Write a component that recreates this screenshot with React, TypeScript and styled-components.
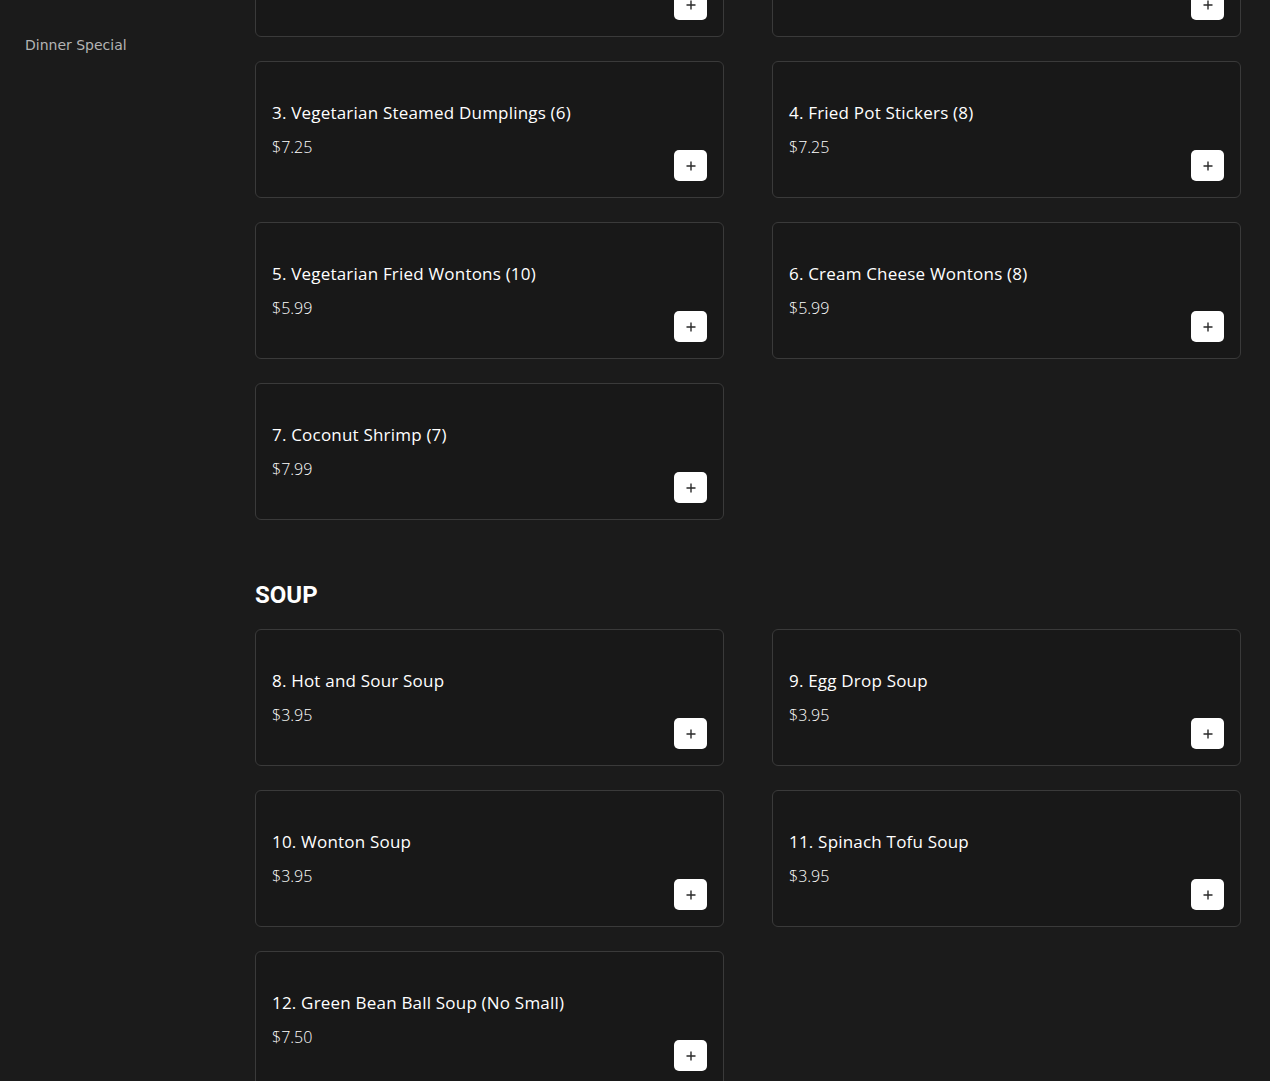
import * as React from "react";
import styled, { createGlobalStyle } from "styled-components";

const GlobalStyle = createGlobalStyle`
  html, body {
    margin: 0;
    padding: 0;
    background: #1b1b1b;
    overflow: hidden;
  }
  body {
    font-family: "Open Sans", "Liberation Sans", sans-serif;
    color: #fff;
  }
`;

interface MenuItem {
  name: string;
  price: string;
}

interface MenuSection {
  title: string;
  items: MenuItem[];
}

const sections: MenuSection[] = [
  {
    title: "APPETIZERS",
    items: [
      { name: "1. Egg Rolls (2)", price: "$3.25" },
      { name: "2. Steamed Dumplings (6)", price: "$7.25" },
      { name: "3. Vegetarian Steamed Dumplings (6)", price: "$7.25" },
      { name: "4. Fried Pot Stickers (8)", price: "$7.25" },
      { name: "5. Vegetarian Fried Wontons (10)", price: "$5.99" },
      { name: "6. Cream Cheese Wontons (8)", price: "$5.99" },
      { name: "7. Coconut Shrimp (7)", price: "$7.99" },
    ],
  },
  {
    title: "SOUP",
    items: [
      { name: "8. Hot and Sour Soup", price: "$3.95" },
      { name: "9. Egg Drop Soup", price: "$3.95" },
      { name: "10. Wonton Soup", price: "$3.95" },
      { name: "11. Spinach Tofu Soup", price: "$3.95" },
      { name: "12. Green Bean Ball Soup (No Small)", price: "$7.50" },
    ],
  },
];

const Page = styled.div`
  display: grid;
  grid-template-columns: 225px 1fr;
  column-gap: 30px;
  padding-right: 29px;
  height: 1081px;
  overflow: hidden;
`;

const Sidebar = styled.aside`
  padding: 36px 0 0 25px;
`;

const SideLink = styled.a`
  display: block;
  font-family: "DejaVu Sans", sans-serif;
  font-size: 14px;
  line-height: 18px;
  color: #b4b4b4;
  text-decoration: none;
`;

// the menu is scrolled part way down, so the first row is cut at the top
const Main = styled.main`
  margin-top: -100px;
`;

const Section = styled.section<{ $first?: boolean }>`
  margin-top: ${(p) => (p.$first ? "0" : "61px")};
`;

const SectionTitle = styled.h2<{ $hidden?: boolean }>`
  display: ${(p) => (p.$hidden ? "none" : "block")};
  margin: 0 0 20px;
  font-family: Roboto, "Liberation Sans", sans-serif;
  font-weight: 700;
  font-size: 24px;
  line-height: 28px;
  color: #fff;
`;

const Grid = styled.div`
  display: grid;
  grid-template-columns: repeat(2, 469px);
  column-gap: 48px;
  row-gap: 24px;
`;

const Card = styled.div`
  box-sizing: border-box;
  height: 137px;
  display: flex;
  justify-content: space-between;
  align-items: flex-end;
  padding: 0 16px 16px;
  background: #181818;
  border: 1px solid #3a3a3a;
  border-radius: 6px;
`;

const Info = styled.div`
  align-self: flex-start;
  padding-top: 39px;
`;

const ItemName = styled.div`
  font-size: 17px;
  font-weight: 500;
  letter-spacing: 0.2px;
  line-height: 24px;
  color: #fff;
`;

const ItemPrice = styled.div`
  margin-top: 10px;
  font-size: 16px;
  font-weight: 300;
  line-height: 24px;
  color: #fff;
`;

const AddButton = styled.button`
  width: 33px;
  height: 31px;
  padding: 0;
  display: flex;
  align-items: center;
  justify-content: center;
  background: #fff;
  border: none;
  border-radius: 5px;
  cursor: pointer;
`;

const PlusIcon = (): React.ReactElement => (
  <svg width="10" height="10" viewBox="0 0 10 10">
    <path d="M5 0.5v9M0.5 5h9" stroke="#2a2a2a" strokeWidth="1.4" />
  </svg>
);

const App: React.FC = (): React.ReactElement => {
  return (
    <>
      <GlobalStyle />
      <Page>
        <Sidebar>
          <SideLink href="#">Dinner Special</SideLink>
        </Sidebar>
        <Main>
          {sections.map((section, i) => (
            <Section key={section.title} $first={i === 0}>
              <SectionTitle $hidden={i === 0}>{section.title}</SectionTitle>
              <Grid>
                {section.items.map((item) => (
                  <Card key={item.name}>
                    <Info>
                      <ItemName>{item.name}</ItemName>
                      <ItemPrice>{item.price}</ItemPrice>
                    </Info>
                    <AddButton aria-label="Add">
                      <PlusIcon />
                    </AddButton>
                  </Card>
                ))}
              </Grid>
            </Section>
          ))}
        </Main>
      </Page>
    </>
  );
};

export default App;
